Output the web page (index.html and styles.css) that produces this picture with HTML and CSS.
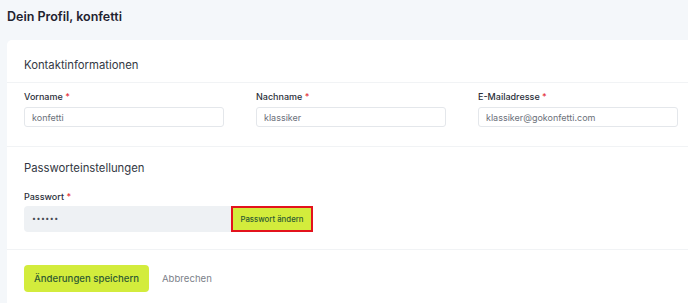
FILE: index.html
```html
<!DOCTYPE html>
<html>
  <head>
    <meta name="viewport" content="width=device-width, initial-scale=1.0" />
    <meta charset="utf-8" />
    <title>Dein Profil</title>
    <link rel="stylesheet" href="styles.css">
  </head>
  <body>
    <h1 class="page__title">Dein Profil, konfetti</h1>
    <form class="card">
      <div class="card__head">Kontaktinformationen</div>
      <div class="card__body fields">
        <div class="field">
          <label class="field__label">Vorname <span class="field__star">*</span></label>
          <input class="field__input" type="text" value="konfetti" />
        </div>
        <div class="field">
          <label class="field__label">Nachname <span class="field__star">*</span></label>
          <input class="field__input" type="text" value="klassiker" />
        </div>
        <div class="field">
          <label class="field__label">E-Mailadresse <span class="field__star">*</span></label>
          <input class="field__input" type="text" value="klassiker@gokonfetti.com" />
        </div>
      </div>
      <div class="card__body password">
        <div class="password__title">Passworteinstellungen</div>
        <label class="field__label">Passwort <span class="field__star">*</span></label>
        <div class="password__row">
          <div class="password__input">••••••</div>
          <button class="password__button" type="button">Passwort ändern</button>
        </div>
      </div>
      <div class="card__footer">
        <button class="button button--primary" type="submit">Änderungen speichern</button>
        <button class="button button--link" type="button">Abbrechen</button>
      </div>
    </form>
  </body>
</html>
```

FILE: styles.css
```css
body {
  --color-lime: #d3ec3c;
  --color-lime-text: #2e5a32;
  --color-text: #2b2f3a;
  --color-muted: #6b7079;
  --color-line: #f1f3f5;
  --color-star: #e5333b;

  margin: 0;
  background: #f4f7fa;
  font-family: "Inter", "Open Sans", sans-serif;
  color: var(--color-text);
  overflow: hidden;
}

.page__title {
  margin: 0;
  padding: 9px 7px 0;
  height: 40px;
  box-sizing: border-box;
  font-size: 12.5px;
  line-height: 16px;
  font-weight: 600;
  color: #1f2330;
}

.card {
  margin-left: 7px;
  background: #ffffff;
  border-radius: 5px 0 0 0;
}

.card__head {
  padding: 17px 17px 9px;
  font-size: 11.3px;
  line-height: 16px;
  color: #333843;
  border-bottom: 1px solid var(--color-line);
}

.card__body {
  padding: 0 17px;
  border-bottom: 1px solid var(--color-line);
}

.fields {
  display: grid;
  grid-template-columns: 200px 190px 200px;
  column-gap: 32px;
  padding-top: 6px;
  padding-bottom: 19px;
}

.field__label {
  display: block;
  font-size: 9px;
  line-height: 16px;
  font-weight: 500;
  color: #2b2f3a;
  margin-bottom: 2px;
}

.field__star {
  color: var(--color-star);
}

.field__input {
  display: block;
  width: 100%;
  height: 20px;
  box-sizing: border-box;
  padding: 0 7px;
  border: 1px solid #e4e7eb;
  border-radius: 3px;
  font: 400 9px "Inter", "Open Sans", sans-serif;
  color: var(--color-muted);
  outline: none;
}

.password {
  padding-top: 13px;
  padding-bottom: 17px;
}

.password__title {
  font-size: 11.3px;
  line-height: 16px;
  color: #333843;
  margin-bottom: 13px;
}

.password .field__label {
  margin-bottom: 1px;
}

.password__row {
  display: flex;
}

.password__input {
  width: 207px;
  height: 26px;
  box-sizing: border-box;
  padding: 0 8px;
  background: #eef1f4;
  border-radius: 4px 0 0 4px;
  font-size: 7px;
  line-height: 26px;
  letter-spacing: 0.5px;
  color: #444851;
}

.password__button {
  width: 82px;
  height: 26px;
  padding: 0;
  background: var(--color-lime);
  border: 2px solid #e3131c;
  font: 500 7.8px "Inter", "Open Sans", sans-serif;
  color: var(--color-lime-text);
  cursor: pointer;
}

.card__footer {
  display: flex;
  align-items: center;
  gap: 13px;
  padding: 15px 17px 20px;
}

.button {
  border: none;
  cursor: pointer;
  white-space: nowrap;
  font: 500 9.6px "Inter", "Open Sans", sans-serif;
}

.button--primary {
  width: 125px;
  height: 27px;
  border-radius: 4px;
  background: var(--color-lime);
  color: var(--color-lime-text);
}

.button--link {
  background: none;
  padding: 0;
  color: #7c818a;
  font-weight: 400;
}
```
